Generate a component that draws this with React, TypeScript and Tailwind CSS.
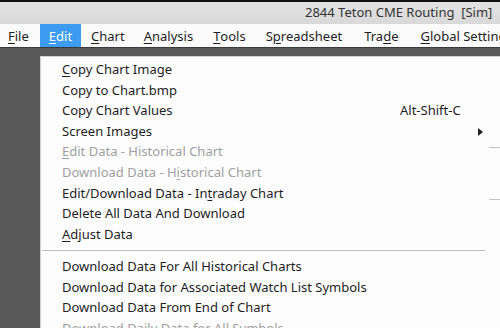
import React from "react";

type Item = { label: React.ReactNode; disabled?: boolean; shortcut?: string; sub?: boolean };

const U = ({ c }: { c: string }) => <span className="underline underline-offset-2 decoration-1">{c}</span>;

const itemsA: Item[] = [
  { label: <><U c="C" />opy Chart Image</> },
  { label: <>Copy to Chart.bmp</> },
  { label: <>Copy Chart Values</>, shortcut: "Alt-Shift-C" },
  { label: <>Screen Images</>, sub: true },
  { label: <><U c="E" />dit Data - Historical Chart</>, disabled: true },
  { label: <>Download Data - H<U c="i" />storical Chart</>, disabled: true },
  { label: <>Edit/Download Data - In<U c="t" />raday Chart</> },
  { label: <>Delete All Data And Download</> },
  { label: <><U c="A" />djust Data</> },
];

const itemsB: Item[] = [
  { label: <>Download Data For All Historical Charts</> },
  { label: <>Download Data for Associated Watch List Symbols</> },
  { label: <>Download Data From End of Chart</> },
  { label: <>Download Daily Data for All Symbols</>, disabled: true },
];

function Row({ it }: { it: Item }) {
  return (
    <div className={`h-[20.6px] flex items-center pl-[21px] pr-[6px] ${it.disabled ? "text-[#a0a0a0]" : "text-[#1e1e1e]"}`}>
      <span className="flex-1 whitespace-nowrap">{it.label}</span>
      {it.shortcut && <span className="w-[83px] whitespace-nowrap">{it.shortcut}</span>}
      {it.sub && (
        <svg width="5" height="8" viewBox="0 0 5 8">
          <path d="M0 0 L5 4 L0 8 Z" fill="#222" />
        </svg>
      )}
    </div>
  );
}

const menus: { node: React.ReactNode; active?: boolean; cls: string }[] = [
  { node: <><U c="F" />ile</>, cls: "px-[9px]" },
  { node: <><U c="E" />dit</>, active: true, cls: "px-[9px]" },
  { node: <><U c="C" />hart</>, cls: "px-[8px]" },
  { node: <><U c="A" />nalysis</>, cls: "px-[9px]" },
  { node: <><U c="T" />ools</>, cls: "px-[9px]" },
  { node: <>S<U c="p" />readsheet</>, cls: "px-[9px]" },
  { node: <>Tra<U c="d" />e</>, cls: "px-[11px]" },
  { node: <><U c="G" />lobal Settings</>, cls: "px-[9px]" },
];

export default function App() {
  return (
    <div
      className="w-[500px] h-[328px] overflow-hidden flex flex-col bg-[#595959] text-[13px]"
      style={{ fontFamily: '"Noto Sans", "Open Sans", sans-serif' }}
    >
      <div className="h-[2px] bg-[#111] shrink-0" />
      <div className="h-[22px] shrink-0 bg-gradient-to-b from-[#e4e4e4] to-[#d9d9d9] flex items-center pl-[305px] text-[#333] whitespace-nowrap">
        2844 Teton CME Routing&nbsp;&nbsp;[Sim]
      </div>
      <div className="h-[23px] shrink-0 bg-[#fbfbfb] flex items-stretch whitespace-nowrap text-[13px] text-[#1e1e1e] gap-[2px] ml-[-1px]">
        {menus.map((m, i) => (
          <div
            key={i}
            className={`flex items-center pt-[2px] ${m.cls} ${m.active ? "bg-[#3d9bf0] text-white" : ""}`}
          >
            {m.node}
          </div>
        ))}
      </div>
      <div className="h-[1px] shrink-0 bg-[#3a3a3a]" />
      <div className="flex-1 pl-[40px] pt-[8px] flex">
        <div className="flex-1 bg-[#fdfdfd] border-l border-t border-[#d0d0d0] pt-[2.5px] flex">
          <div className="w-[448px] shrink-0">
            {itemsA.map((it, i) => <Row key={i} it={it} />)}
            <div className="h-[11.6px] flex items-center pl-[1px] pr-[4px]">
              <div className="h-[1px] w-full bg-[#bdbdbd]" />
            </div>
            {itemsB.map((it, i) => <Row key={i} it={it} />)}
          </div>
          <div className="flex-1 flex flex-col">
            <div className="h-[87px]" />
            <div className="h-[1px] bg-[#c4c4c4]" />
            <div className="h-[51px]" />
            <div className="h-[1px] bg-[#c4c4c4]" />
          </div>
        </div>
      </div>
    </div>
  );
}
